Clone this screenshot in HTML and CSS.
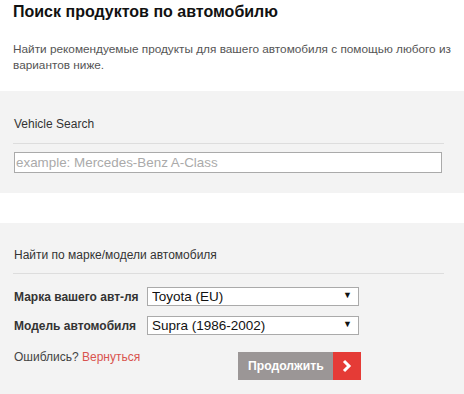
FILE: index.html
```html
<!DOCTYPE html>
<html lang="ru">
<head>
  <meta charset="UTF-8" />
  <title>Поиск продуктов по автомобилю</title>
  <link rel="stylesheet" href="styles.css">
</head>
<body>
  <div class="intro">
    <h1 class="title">Поиск продуктов по автомобилю</h1>
    <p class="lead">Найти рекомендуемые продукты для вашего автомобиля с помощью любого из вариантов ниже.</p>
  </div>

  <div class="panel search">
    <div class="panel-head">Vehicle Search</div>
    <input class="search-input" type="text" placeholder="example: Mercedes-Benz A-Class">
  </div>

  <div class="panel finder">
    <div class="panel-head">Найти по марке/модели автомобиля</div>
    <div class="field">
      <label class="field-label">Марка вашего авт-ля</label>
      <div class="select">
        <select><option>Toyota (EU)</option></select>
      </div>
    </div>
    <div class="field">
      <label class="field-label">Модель автомобиля</label>
      <div class="select">
        <select><option>Supra (1986-2002)</option></select>
      </div>
    </div>
    <div class="actions">
      <div class="back">Ошиблись? <a href="#">Вернуться</a></div>
      <button class="go">
        <span class="go-text">Продолжить</span>
        <span class="go-arrow">
          <svg width="12" height="14" viewBox="0 0 12 14"><path d="M3 2l5 5-5 5" fill="none" stroke="#fff" stroke-width="3"/></svg>
        </span>
      </button>
    </div>
  </div>
</body>
</html>
```

FILE: styles.css
```css
* {
  box-sizing: border-box;
}

body {
  margin: 0;
  background: #fff;
  font-family: 'Liberation Sans', Arial, sans-serif;
  color: #333;
}

.intro {
  padding: 1px 3px 0 13px;
  height: 91px;
}

.title {
  margin: 0;
  font-size: 16px;
  line-height: 22px;
  color: #111;
}

.lead {
  margin: 18px 0 0;
  font-size: 11.8px;
  line-height: 16px;
  color: #555;
}

.panel {
  background: #f3f3f3;
  padding: 0 20px 0 13px;
}

.search {
  height: 102px;
  padding-top: 25px;
}

.finder {
  margin-top: 30px;
  height: 171px;
  padding-top: 24px;
}

.panel-head {
  font-size: 12px;
  line-height: 16px;
  padding-left: 1px;
  padding-bottom: 11px;
  border-bottom: 1px solid #ddd;
  color: #333;
}

.search-input {
  display: block;
  width: 428px;
  height: 21px;
  margin: 8px 0 0 1px;
  padding: 0 1px;
  border: 1px solid #aaa;
  background: #fff;
  font-family: inherit;
  font-size: 13.4px;
  color: #333;
  outline: none;
}

.search-input::placeholder {
  color: #aaa;
}

.finder .panel-head {
  padding-bottom: 10px;
  margin-bottom: 13px;
}

.field {
  display: flex;
  align-items: center;
  margin-bottom: 10px;
}

.field-label {
  width: 134px;
  padding-left: 1px;
  font-size: 12px;
  font-weight: bold;
  color: #333;
}

.select {
  position: relative;
  width: 212px;
  height: 19px;
}

.select select {
  appearance: none;
  -webkit-appearance: none;
  width: 100%;
  height: 100%;
  margin: 0;
  padding: 0 4px;
  border: 1px solid #aaa;
  border-radius: 0;
  background: #fff;
  font-family: inherit;
  font-size: 13.5px;
  color: #111;
}

.select::after {
  content: '▼';
  position: absolute;
  right: 7px;
  top: 3px;
  font-size: 9px;
  color: #111;
  pointer-events: none;
}

.actions {
  display: flex;
  justify-content: space-between;
  align-items: flex-start;
  width: 348px;
  margin-top: 14px;
  padding-left: 1px;
}

.back {
  font-size: 12px;
  line-height: 16px;
  color: #444;
}

.back a {
  color: #d9534f;
  text-decoration: none;
}

.go {
  display: flex;
  height: 28px;
  margin-top: 3px;
  padding: 0;
  border: none;
  background: none;
  cursor: pointer;
}

.go-text {
  display: flex;
  align-items: center;
  width: 95px;
  padding-left: 10px;
  background: #9b9696;
  color: #fff;
  font-family: inherit;
  font-size: 12.2px;
  font-weight: bold;
}

.go-arrow {
  display: flex;
  align-items: center;
  justify-content: center;
  width: 28px;
  background: #e53b36;
}
```
